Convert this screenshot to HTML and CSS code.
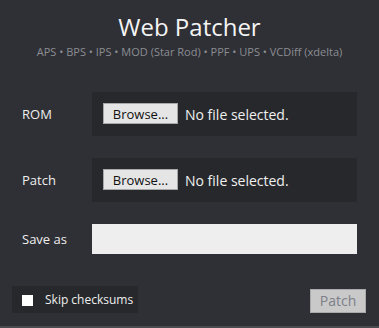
FILE: index.html
```html
<!DOCTYPE html>
<html>
<head>
<meta charset="utf-8">
<link rel="stylesheet" href="styles.css">
</head>
<body>
<div class="page">
  <header class="head">
    <h1 class="title">Web Patcher</h1>
    <p class="formats">APS • BPS • IPS • MOD (Star Rod) • PPF • UPS • VCDiff (xdelta)</p>
  </header>
  <div class="form">
    <div class="row">
      <label class="label">ROM</label>
      <div class="filebox">
        <span class="browse">Browse...</span>
        <span class="nofile">No file selected.</span>
      </div>
    </div>
    <div class="row">
      <label class="label">Patch</label>
      <div class="filebox">
        <span class="browse">Browse...</span>
        <span class="nofile">No file selected.</span>
      </div>
    </div>
    <div class="row">
      <label class="label">Save as</label>
      <div class="textbox"></div>
    </div>
  </div>
  <div class="actions">
    <div class="skip">
      <span class="check"></span>
      <span class="skiptext">Skip checksums</span>
    </div>
    <span class="patchbtn">Patch</span>
  </div>
  <div class="stripe"></div>
</div>
</body>
</html>
```
FILE: styles.css
```css
html, body {
  margin: 0;
  padding: 0;
  background: #2f3035;
  overflow: hidden;
}
.page {
  font-family: "Open Sans", "Noto Sans", sans-serif;
  color: #ececec;
  width: 379px;
  height: 328px;
  display: flex;
  flex-direction: column;
}
.head {
  padding-top: 9px;
  text-align: center;
}
.title {
  margin: 0;
  font-size: 24px;
  line-height: 35px;
  font-weight: 400;
  color: #f4f4f4;
}
.formats {
  margin: 0;
  font-size: 11px;
  line-height: 15px;
  color: #8b8d93;
}
.form {
  margin-top: 33px;
  padding: 0 22px;
  display: flex;
  flex-direction: column;
  gap: 22px;
}
.row {
  display: flex;
  align-items: center;
}
.label {
  width: 70px;
  font-size: 13px;
  color: #eeeeee;
}
.filebox {
  flex: 1;
  height: 44px;
  box-sizing: border-box;
  background: #27282c;
  display: flex;
  align-items: center;
  padding: 0 11px;
  gap: 7px;
}
.browse {
  box-sizing: border-box;
  width: 75px;
  height: 21px;
  background: #e5e5e5;
  border: 1px solid #a8a8a8;
  color: #111;
  font-size: 13px;
  line-height: 20px;
  text-align: center;
  margin-top: -1px;
}
.nofile {
  font-size: 14px;
  color: #f0f0f0;
}
.textbox {
  flex: 1;
  height: 30px;
  background: #eeeeee;
}
.actions {
  margin-top: 32px;
  padding: 0 13px 0 12px;
  display: flex;
  justify-content: space-between;
  align-items: flex-end;
}
.skip {
  width: 126px;
  height: 27px;
  box-sizing: border-box;
  background: #27282c;
  display: flex;
  align-items: center;
  padding-left: 10px;
  gap: 12px;
}
.check {
  width: 11px;
  height: 11px;
  background: #ffffff;
  margin-top: 2px;
}
.skiptext {
  font-size: 12px;
  color: #eeeeee;
}
.patchbtn {
  box-sizing: border-box;
  width: 56px;
  height: 24px;
  background: #c9c9c9;
  border: 1px solid #a9a9a9;
  color: #7c808a;
  font-size: 14px;
  line-height: 22px;
  text-align: center;
}
.stripe {
  margin-top: auto;
  height: 2px;
  background: #4b4c50;
}
```
